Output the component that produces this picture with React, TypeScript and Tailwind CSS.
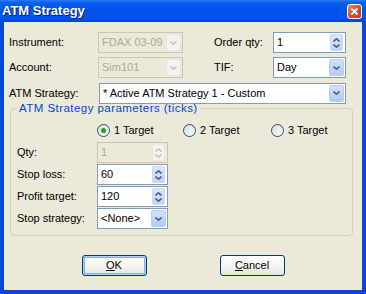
import React from "react";

const Chevron = ({ dir, color }: { dir: "up" | "down"; color: string }) => (
  <svg width="7" height="4" viewBox="0 0 7 4">
    {dir === "down" ? (
      <path d="M0.5 0.5 L3.5 3.2 L6.5 0.5" fill="none" stroke={color} strokeWidth="1.6" />
    ) : (
      <path d="M0.5 3.5 L3.5 0.8 L6.5 3.5" fill="none" stroke={color} strokeWidth="1.6" />
    )}
  </svg>
);

const Combo = ({ value, disabled, w }: { value: string; disabled?: boolean; w: string }) => (
  <div
    className={`${w} h-[21px] flex items-center border ${
      disabled ? "border-[#C9C7BA] bg-[#EBE9D7] text-[#ACA899]" : "border-[#7F9DB9] bg-white text-black"
    }`}
  >
    <div className="flex-1 pl-[3px] whitespace-nowrap overflow-hidden leading-none">{value}</div>
    <div className="h-full p-[1px]">
      <div
        className={`w-[15px] h-full rounded-[2px] flex items-center justify-center border ${
          disabled
            ? "border-[#E8E6DD] bg-[#F4F3EE]"
            : "border-[#B9CEF6] bg-[linear-gradient(to_bottom,#D2E0FB,#B5CAF5)]"
        }`}
      >
        <Chevron dir="down" color={disabled ? "#C9C7BA" : "#4D6185"} />
      </div>
    </div>
  </div>
);

const Spin = ({ value, disabled, w }: { value: string; disabled?: boolean; w: string }) => (
  <div
    className={`${w} h-[21px] flex items-center border ${
      disabled ? "border-[#C9C7BA] bg-[#EBE9D7] text-[#ACA899]" : "border-[#7F9DB9] bg-white text-black"
    }`}
  >
    <div className="flex-1 pl-[3px] leading-none">{value}</div>
    <div className="h-full p-[1px] pr-[2px]">
      <div
        className={`w-[13px] h-full rounded-[2px] flex flex-col items-center justify-center gap-[2px] border ${
          disabled
            ? "border-[#E8E6DD] bg-[#F4F3EE]"
            : "border-[#C9D8F7] bg-[linear-gradient(to_bottom,#DCE6FB,#C1D3F8)]"
        }`}
      >
        <Chevron dir="up" color={disabled ? "#C9C7BA" : "#4D6185"} />
        <Chevron dir="down" color={disabled ? "#C9C7BA" : "#4D6185"} />
      </div>
    </div>
  </div>
);

const Radio = ({ checked, label, w }: { checked?: boolean; label: string; w: string }) => (
  <div className={`${w} flex items-center gap-[4px]`}>
    <div className="w-[13px] h-[13px] rounded-full border border-[#1C5180] bg-[linear-gradient(135deg,#DCDBD5,#FFFFFF)] flex items-center justify-center">
      {checked && <div className="w-[5px] h-[5px] rounded-full bg-[#21A121]" />}
    </div>
    <span className="whitespace-nowrap">{label}</span>
  </div>
);

const Button = ({ children, focused }: { children: React.ReactNode; focused?: boolean }) => (
  <div
    className={`w-[65px] h-[21px] rounded-[3px] border border-[#003C74] flex items-center justify-center bg-[linear-gradient(to_bottom,#FFFFFF,#F3F3EF_60%,#E4E3DA)] ${
      focused ? "shadow-[inset_0_0_0_1px_#B6CDF4,inset_0_0_0_2px_#8AAEEA]" : ""
    }`}
  >
    {children}
  </div>
);

export default function App() {
  return (
    <div className="w-[366px] h-[294px] flex flex-col bg-[#0746DA] font-['Liberation_Sans',Arial,sans-serif] text-[11px] text-black">
      {/* Title bar */}
      <div className="h-[22px] flex items-center justify-between pl-[2px] pr-[4px] bg-[linear-gradient(to_bottom,#2D7BF7_0%,#0A5EEF_12%,#0054E3_45%,#0056EA_80%,#0046D6_100%)]">
        <span className="text-white font-bold text-[13px] [text-shadow:1px_1px_#0A1883]">ATM Strategy</span>
        <div className="w-[15px] h-[15px] rounded-[3px] border border-white bg-[linear-gradient(135deg,#E88A6B,#D4512D_50%,#C03C16)] flex items-center justify-center">
          <svg width="9" height="9" viewBox="0 0 9 9">
            <path d="M1.5 1.5 L7.5 7.5 M7.5 1.5 L1.5 7.5" stroke="white" strokeWidth="1.8" />
          </svg>
        </div>
      </div>

      {/* Client */}
      <div className="flex-1 mx-[4px] mb-[4px] bg-[#ECE9D8] flex flex-col pt-[10px] pl-[5px]">
        <div className="flex flex-col gap-[4px] pr-[15px]">
          <div className="h-[21px] flex items-center">
            <span className="w-[89px]">Instrument:</span>
            <Combo value="FDAX 03-09" disabled w="w-[85px]" />
            <span className="ml-[31px] w-[59px]">Order qty:</span>
            <Spin value="1" w="w-[73px]" />
          </div>
          <div className="h-[21px] flex items-center">
            <span className="w-[89px]">Account:</span>
            <Combo value="Sim101" disabled w="w-[85px]" />
            <span className="ml-[31px] w-[59px]">TIF:</span>
            <Combo value="Day" w="w-[73px]" />
          </div>
          <div className="h-[22px] flex items-center">
            <span className="w-[90px]">ATM Strategy:</span>
            <Combo value="* Active ATM Strategy 1 - Custom" w="w-[247px]" />
          </div>
        </div>

        <fieldset className="mt-[-2px] ml-[1px] mr-[9px] border border-[#D0D0BF] rounded-[4px] pl-[6px] pb-[6px]">
          <legend className="px-[2px] text-[#0046D5] leading-[13px] text-[11.5px] tracking-[0.45px]">
            ATM Strategy parameters (ticks)
          </legend>
          <div className="mt-[4px] h-[22px] flex items-center pl-[80px]">
            <Radio checked label="1 Target" w="w-[86px]" />
            <Radio label="2 Target" w="w-[88px]" />
            <Radio label="3 Target" w="w-[80px]" />
          </div>
          <div className="mt-[1px] flex flex-col gap-[1px]">
            <div className="h-[21px] flex items-center">
              <span className="w-[80px] text-black">Qty:</span>
              <Spin value="1" disabled w="w-[71px]" />
            </div>
            <div className="h-[21px] flex items-center">
              <span className="w-[80px]">Stop loss:</span>
              <Spin value="60" w="w-[71px]" />
            </div>
            <div className="h-[21px] flex items-center">
              <span className="w-[80px]">Profit target:</span>
              <Spin value="120" w="w-[71px]" />
            </div>
            <div className="h-[21px] flex items-center">
              <span className="w-[80px]">Stop strategy:</span>
              <Combo value="<None>" w="w-[71px]" />
            </div>
          </div>
        </fieldset>

        <div className="mt-[19px] flex justify-center gap-[73px] pr-[5px]">
          <Button focused>
            <span>
              <span className="underline">O</span>K
            </span>
          </Button>
          <Button>
            <span>
              <span className="underline">C</span>ancel
            </span>
          </Button>
        </div>
      </div>
    </div>
  );
}
